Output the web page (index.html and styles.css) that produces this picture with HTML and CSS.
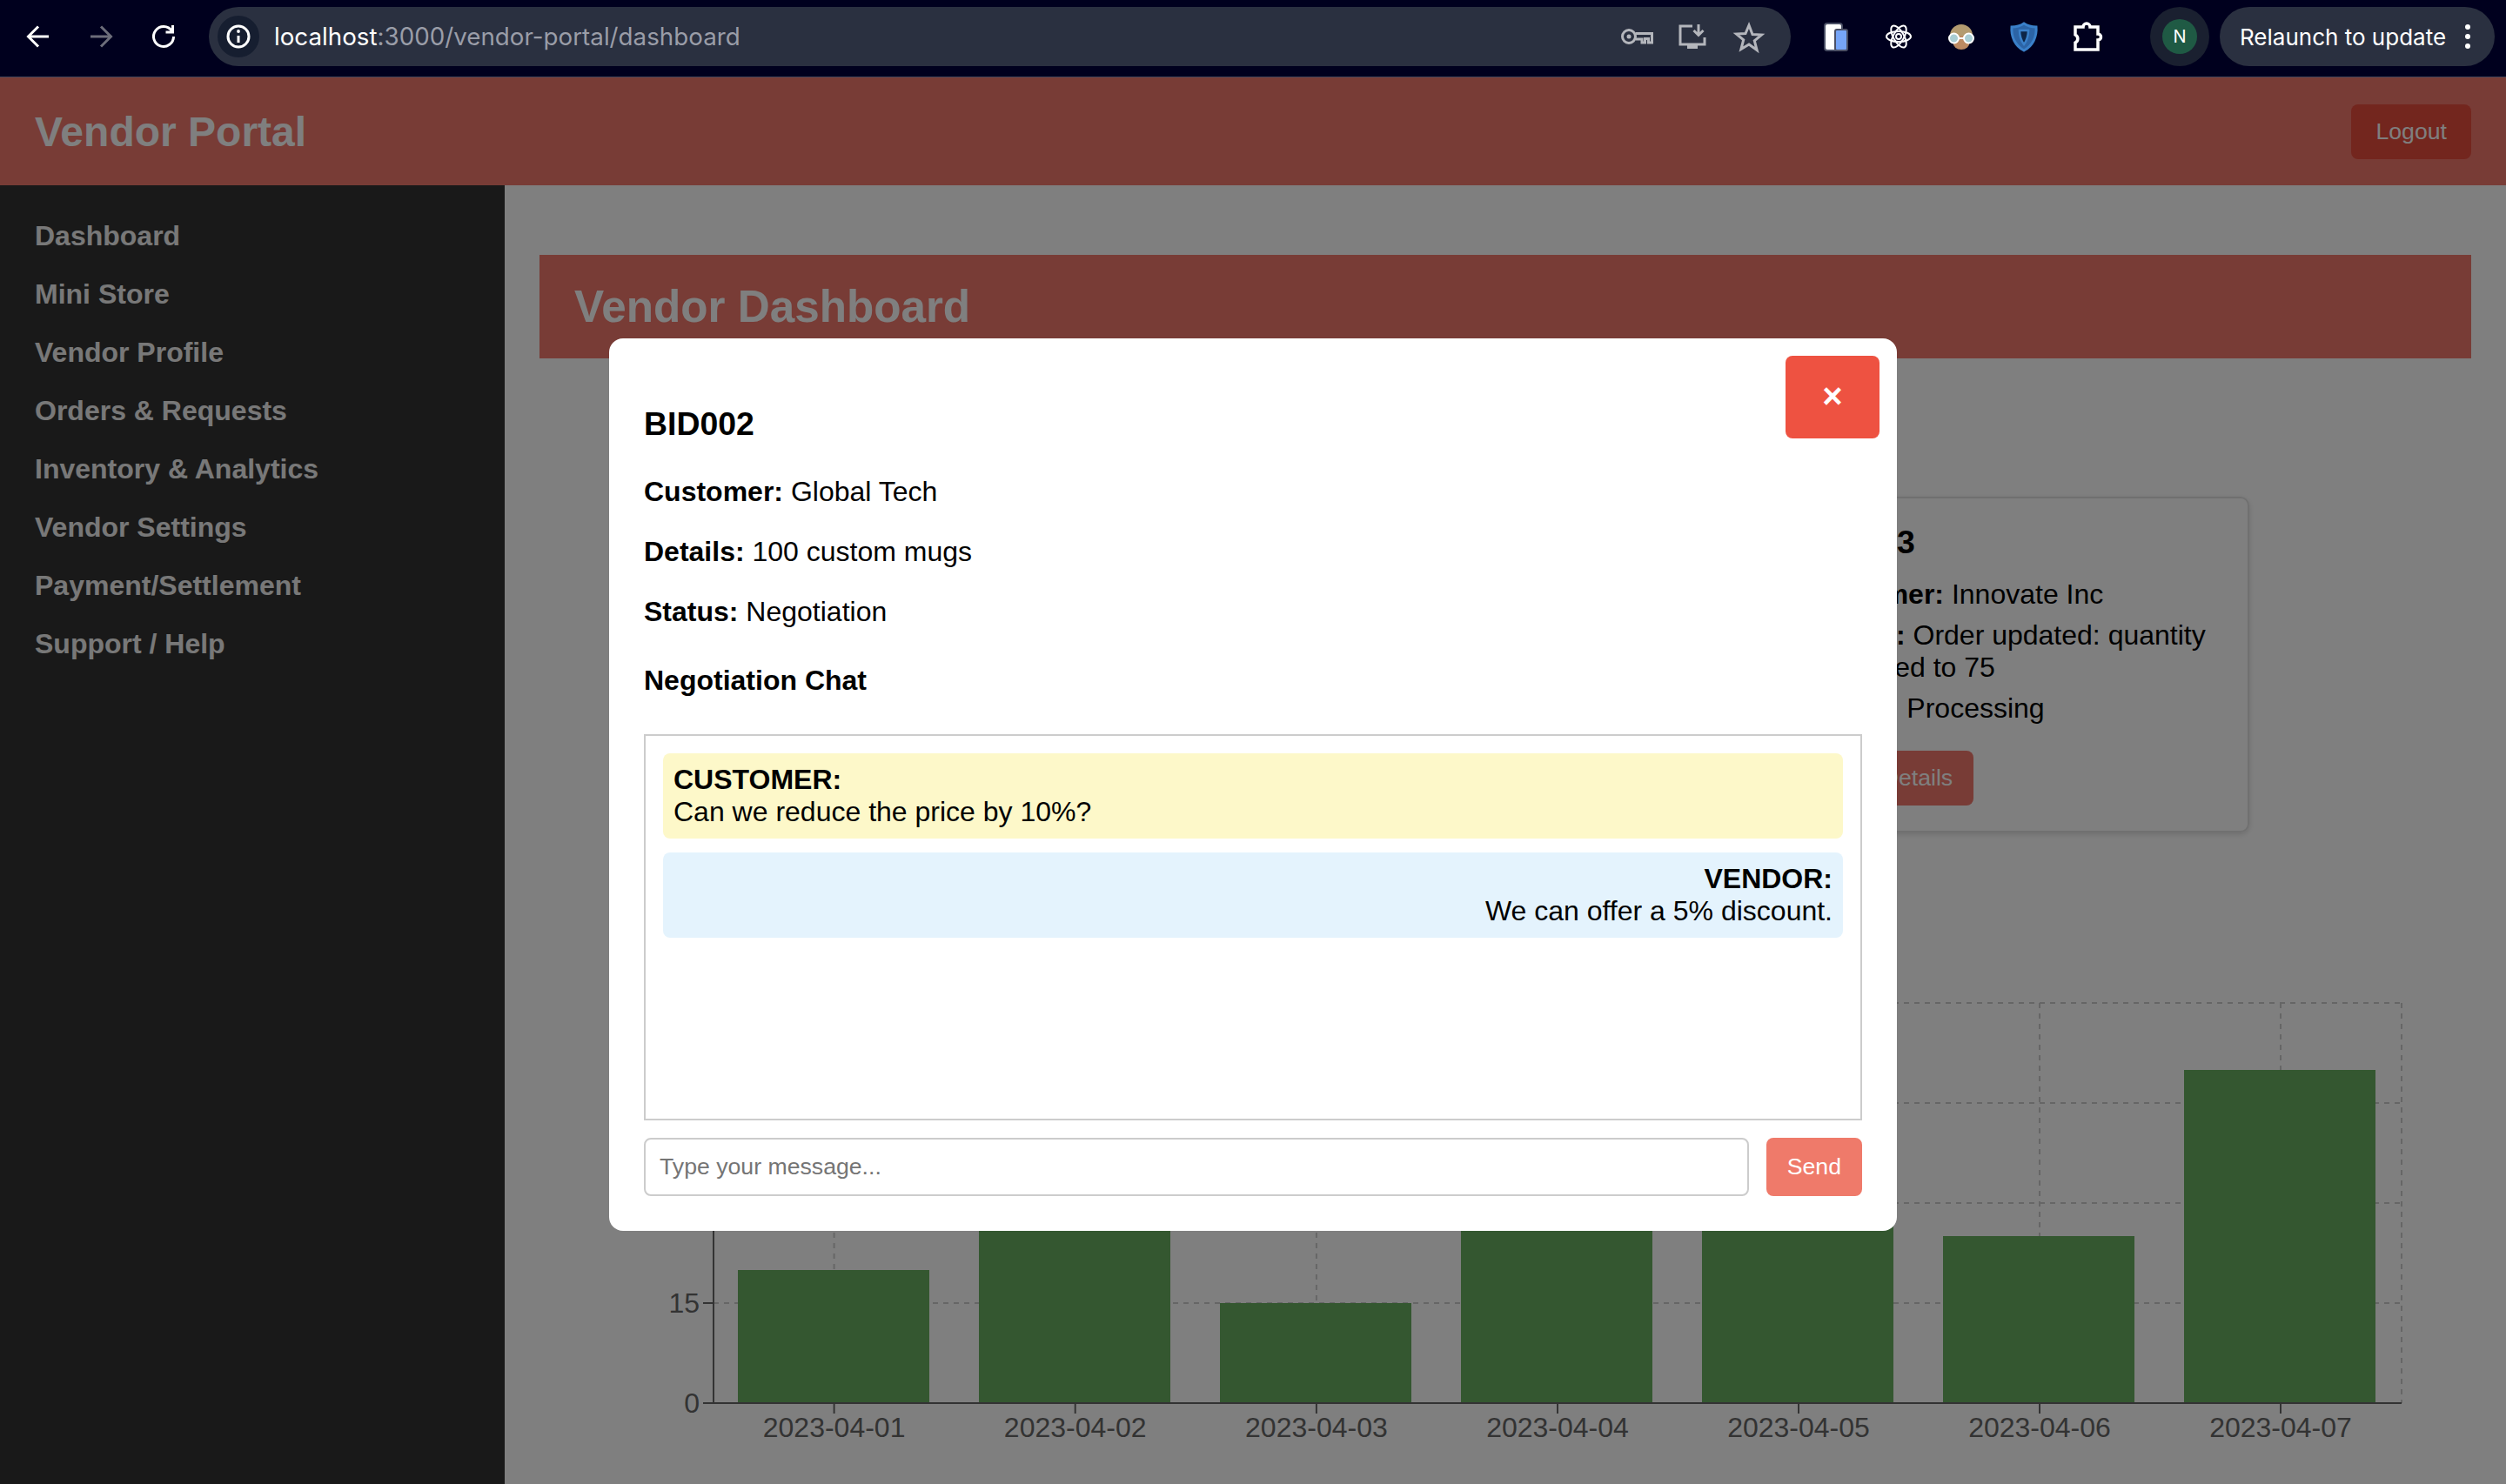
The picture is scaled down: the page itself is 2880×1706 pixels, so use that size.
FILE: index.html
```html
<!DOCTYPE html>
<html lang="en">
<head>
  <meta charset="UTF-8">
  <meta name="viewport" content="width=device-width, initial-scale=1.0">
  <title>Vendor Portal</title>
  <link rel="stylesheet" href="styles.css">
</head>
<body>
  <!-- browser toolbar -->
  <div class="toolbar">
    <div class="nav-buttons">
      <svg class="icon" viewBox="0 0 40 40"><path class="line-white" d="M32 20H9M20 8.500L8.500 20L20 31.500"/></svg>
      <svg class="icon" viewBox="0 0 40 40"><path class="line-dim" d="M8 20H31M20 8.500L31.500 20L20 31.500"/></svg>
      <svg class="icon" viewBox="0 0 40 40"><path class="line-white" d="M29.500 13.500A11.500 11.500 0 1 0 31.500 20M30.500 7v8h-8"/></svg>
    </div>
    <div class="address-bar">
      <span class="site-info">
        <svg class="info-icon" viewBox="0 0 48 48"><circle class="line-white" cx="24" cy="24" r="12"/><path class="line-white" d="M24 23v8"/><circle class="fill-white" cx="24" cy="18" r="1.900"/></svg>
      </span>
      <span class="url"><span class="url-host">localhost</span>:3000/vendor-portal/dashboard</span>
      <div class="address-actions">
        <svg class="icon" viewBox="0 0 40 40"><circle class="line-grey" cx="12" cy="20" r="7.500"/><circle class="fill-grey" cx="12" cy="20" r="2.500"/><path class="line-grey" d="M19.500 16.500H38.500V27h-4v-4.500h-4V27h-3.500v-4H19.500"/></svg>
        <svg class="icon" viewBox="0 0 40 40"><path class="line-grey" d="M20 8H6V29H34V21M27 6V18M21.500 13l5.500 5.500L32.500 13"/><rect class="fill-grey" x="14" y="30" width="12" height="4"/></svg>
        <svg class="icon" viewBox="0 0 40 40"><path class="line-grey" d="M20 7l4 10.500 10.500.6-8.200 6.800 2.800 10.600L20 29l-9.100 5.500 2.800-10.600-8.200-6.800 10.500-.6z"/></svg>
      </div>
    </div>
    <div class="extensions">
      <svg class="icon" viewBox="0 0 40 40"><rect x="7" y="5" width="20" height="31" rx="3" fill="#fff" stroke="#4b5066" stroke-width="2"/><rect x="19" y="12" width="14" height="24" rx="2" fill="#76a5f8" stroke="#4b5066" stroke-width="2"/></svg>
      <svg class="icon" viewBox="0 0 40 40"><g class="line-thin"><ellipse cx="20" cy="20" rx="14" ry="6"/><ellipse cx="20" cy="20" rx="14" ry="6" transform="rotate(60 20 20)"/><ellipse cx="20" cy="20" rx="14" ry="6" transform="rotate(120 20 20)"/><circle cx="20" cy="20" r="3"/></g></svg>
      <svg class="icon" viewBox="0 0 40 40"><circle cx="20" cy="19" r="13" fill="#b39b70"/><ellipse cx="20" cy="27" rx="9.500" ry="8" fill="#bd8a62"/><path d="M12 22h16" stroke="#fff" stroke-width="2"/><circle cx="11.500" cy="22" r="5.500" fill="#a9cdd4" stroke="#fff" stroke-width="2"/><circle cx="28.500" cy="22" r="5.500" fill="#a9cdd4" stroke="#fff" stroke-width="2"/></svg>
      <svg class="icon" viewBox="0 0 40 40"><path d="M20 5C26 9 31 9 34 9C35 20 30 31 20 36C10 31 5 20 6 9C9 9 14 9 20 5Z" fill="#2c64a6" stroke="#3a80c9" stroke-width="3"/><path d="M15 13H25C25 20 23 25 20 29C17 25 15 20 15 13Z" fill="#0d2547" stroke="#3a80c9" stroke-width="2.500"/></svg>
      <svg class="icon" viewBox="0 0 40 40"><path class="line-white puzzle" d="M7 9h9a4 4 0 0 1 8 0h9v8a3.500 3.500 0 0 1 0 7v11H7v-8a5 5 0 0 0 0-9z"/></svg>
    </div>
    <div class="profile"><span class="profile-badge">N</span></div>
    <div class="relaunch">
      <span>Relaunch to update</span>
      <svg class="menu-dots" viewBox="0 0 8 32"><circle class="fill-white" cx="4" cy="5" r="3"/><circle class="fill-white" cx="4" cy="16" r="3"/><circle class="fill-white" cx="4" cy="27" r="3"/></svg>
    </div>
  </div>

  <div class="app">
    <header class="topbar">
      <h1>Vendor Portal</h1>
      <button class="logout">Logout</button>
    </header>

    <div class="layout">
      <nav class="sidebar">
        <a>Dashboard</a>
        <a>Mini Store</a>
        <a>Vendor Profile</a>
        <a>Orders &amp; Requests</a>
        <a>Inventory &amp; Analytics</a>
        <a>Vendor Settings</a>
        <a>Payment/Settlement</a>
        <a>Support / Help</a>
      </nav>

      <main class="content">
        <div class="page-title">Vendor Dashboard</div>

        <div class="bids">
          <div class="bid-card">
            <h3>BID003</h3>
            <p><strong>Customer:</strong> Innovate Inc</p>
            <p><strong>Details:</strong> Order updated: quantity increased to 75</p>
            <p><strong>Status:</strong> Processing</p>
            <button class="details-btn">View Details</button>
          </div>
        </div>

        <svg class="chart" viewBox="0 0 2040 576">
          <g class="grid">
            <path d="M60 23H2000M60 138H2000M60 253H2000M60 368H2000"/>
            <path d="M198.600 23V483M475.700 23V483M752.900 23V483M1030 23V483M1307 23V483M1584 23V483M1861 23V483M2000 23V483"/>
          </g>
          <g class="bars">
            <rect x="88" y="330" width="220" height="153"/>
            <rect x="365" y="253" width="220" height="230"/>
            <rect x="642" y="368" width="220" height="115"/>
            <rect x="919" y="215" width="220" height="268"/>
            <rect x="1196" y="176" width="220" height="307"/>
            <rect x="1473" y="291" width="220" height="192"/>
            <rect x="1750" y="100" width="220" height="383"/>
          </g>
          <g class="axis">
            <path d="M60 23V483M48 483H2000"/>
            <path d="M48 23H60M48 138H60M48 253H60M48 368H60"/>
            <path d="M198.600 483v12M475.700 483v12M752.900 483v12M1030 483v12M1307 483v12M1584 483v12M1861 483v12"/>
          </g>
          <g class="tick-y">
            <text x="44" y="34">60</text>
            <text x="44" y="149">45</text>
            <text x="44" y="264">30</text>
            <text x="44" y="379">15</text>
            <text x="44" y="494">0</text>
          </g>
          <g class="tick-x">
            <text x="198.600" y="522">2023-04-01</text>
            <text x="475.700" y="522">2023-04-02</text>
            <text x="752.900" y="522">2023-04-03</text>
            <text x="1030" y="522">2023-04-04</text>
            <text x="1307" y="522">2023-04-05</text>
            <text x="1584" y="522">2023-04-06</text>
            <text x="1861" y="522">2023-04-07</text>
          </g>
        </svg>
      </main>
    </div>

    <!-- negotiation modal -->
    <div class="overlay">
      <div class="modal">
        <button class="close-btn">×</button>
        <h3>BID002</h3>
        <p><strong>Customer:</strong> Global Tech</p>
        <p><strong>Details:</strong> 100 custom mugs</p>
        <p><strong>Status:</strong> Negotiation</p>
        <h4>Negotiation Chat</h4>
        <div class="chat-box">
          <div class="msg msg-customer"><strong>CUSTOMER:</strong><br>Can we reduce the price by 10%?</div>
          <div class="msg msg-vendor"><strong>VENDOR:</strong><br>We can offer a 5% discount.</div>
        </div>
        <div class="chat-form">
          <input type="text" placeholder="Type your message...">
          <button class="send-btn">Send</button>
        </div>
      </div>
    </div>
  </div>
</body>
</html>
```

FILE: styles.css
```css
* {
  box-sizing: border-box;
}
body {
  margin: 0;
  height: 100vh;
  overflow: hidden;
  display: flex;
  flex-direction: column;
  font-family: "Liberation Sans", Arial, sans-serif;
  font-size: 32px;
  background-color: #fff;
}

/* browser toolbar */
.toolbar {
  flex: none;
  height: 89px;
  padding: 8px 13px 8px 24px;
  display: flex;
  align-items: flex-start;
  background-color: #00001e;
  border-bottom: 1px solid #45465a;
  font-family: Inter, "Liberation Sans", sans-serif;
  color: #fff;
}
.icon {
  width: 40px;
  height: 40px;
  flex: none;
}
.line-white, .line-dim, .line-grey, .line-thin {
  fill: none;
  stroke-width: 3;
}
.line-white {
  stroke: #fff;
}
.line-dim {
  stroke: #6c6d7a;
}
.line-grey {
  stroke: #b4b6bc;
}
.line-thin {
  fill: none;
  stroke: #fff;
  stroke-width: 2;
}
.puzzle {
  stroke-width: 3.5;
}
.fill-white {
  fill: #fff;
}
.fill-grey {
  fill: #b4b6bc;
}
.nav-buttons {
  display: flex;
  gap: 32px;
  height: 68px;
  align-items: center;
}
.address-bar {
  flex: 1;
  height: 68px;
  margin-left: 32px;
  padding: 0 28px 0 10px;
  display: flex;
  align-items: center;
  background-color: #2a3040;
  border-radius: 34px;
}
.site-info {
  width: 48px;
  height: 48px;
  border-radius: 50%;
  background-color: #161e30;
}
.info-icon {
  display: block;
  width: 48px;
  height: 48px;
}
.url {
  margin-left: 17px;
  font-size: 27.750px;
  color: #9a9da8;
}
.url-host {
  color: #fff;
}
.address-actions {
  margin-left: auto;
  display: flex;
  gap: 25px;
}
.extensions {
  display: flex;
  gap: 32px;
  height: 68px;
  align-items: center;
  margin-left: 32px;
}
.profile {
  width: 68px;
  height: 68px;
  margin-left: 53px;
  display: flex;
  align-items: center;
  justify-content: center;
  border-radius: 50%;
  background-color: #1a2030;
}
.profile-badge {
  width: 40px;
  height: 40px;
  display: flex;
  align-items: center;
  justify-content: center;
  border-radius: 50%;
  background-color: #1f5a44;
  font-size: 20px;
}
.relaunch {
  width: 316px;
  height: 68px;
  margin-left: 12px;
  padding-left: 23px;
  display: flex;
  align-items: center;
  background-color: #2a3040;
  border-radius: 34px;
  font-size: 26px;
}
.menu-dots {
  width: 8px;
  height: 32px;
  margin-left: 21px;
}

/* page */
.app {
  flex: 1;
  position: relative;
  display: flex;
  flex-direction: column;
  min-height: 0;
}
.topbar {
  flex: none;
  height: 124px;
  padding: 0 40px;
  display: flex;
  align-items: center;
  justify-content: space-between;
  background-color: #f0786c;
  color: #fff;
}
.topbar h1 {
  margin: 0;
  font-size: 48px;
}
button {
  font-family: inherit;
  font-size: 26.670px;
  color: #fff;
  border: none;
  border-radius: 8px;
}
.logout {
  padding: 16px 28px;
  background-color: #e74c3c;
}
.layout {
  flex: 1;
  display: flex;
  min-height: 0;
}
.sidebar {
  flex: none;
  width: 580px;
  padding: 25px 0 0 40px;
  display: flex;
  flex-direction: column;
  background-color: #333;
  color: #f0f0f0;
  font-weight: bold;
}
.sidebar a {
  padding: 15px 0;
}
.content {
  flex: 1;
  min-width: 0;
  padding: 80px 40px 0;
  overflow: hidden;
}
.page-title {
  height: 119px;
  padding: 30px 40px 0;
  background-color: #f0786c;
  color: #fff;
  font-size: 51.200px;
  font-weight: bold;
}
.bids {
  margin-top: 159px;
  padding-right: 255px;
  display: flex;
  justify-content: flex-end;
}
.bid-card {
  width: 553px;
  padding: 29px 40px 29px;
  border: 2px solid #e0e0e0;
  border-radius: 10px;
  box-shadow: 0 2px 6px rgba(0, 0, 0, 0.15);
}
.bid-card h3 {
  margin: 0 0 20px;
  font-size: 37.440px;
}
.bid-card p {
  margin: 0 0 10px;
}
.details-btn {
  margin-top: 20px;
  padding: 16px 24px;
  background-color: #f0786c;
}

/* chart */
.chart {
  display: block;
  width: 2040px;
  height: 576px;
  margin: 173px 0 0 140px;
}
.grid {
  fill: none;
  stroke: #ccc;
  stroke-width: 2;
  stroke-dasharray: 6 6;
}
.bars {
  fill: #69ae60;
}
.axis {
  fill: none;
  stroke: #666;
  stroke-width: 2;
}
.tick-y, .tick-x {
  fill: #666;
  font-size: 32px;
}
.tick-y {
  text-anchor: end;
}
.tick-x {
  text-anchor: middle;
}

/* modal */
.overlay {
  position: absolute;
  inset: 0;
  padding-top: 300px;
  display: flex;
  justify-content: center;
  align-items: flex-start;
  background-color: rgba(0, 0, 0, 0.5);
}
.modal {
  position: relative;
  width: 1480px;
  padding: 40px;
  background-color: #fff;
  border-radius: 16px;
}
.modal h3 {
  margin: 37.440px 0;
  font-size: 37.440px;
}
.modal p {
  margin: 32px 0;
}
.modal h4 {
  margin: 42.560px 0;
  font-size: 32px;
}
.close-btn {
  position: absolute;
  top: 20px;
  right: 20px;
  width: 108px;
  height: 95px;
  padding: 0 0 3px;
  background-color: #ee5241;
  font-size: 40px;
  font-weight: bold;
}
.chat-box {
  height: 444px;
  padding: 20px;
  border: 2px solid #ccc;
}
.msg {
  margin-bottom: 16px;
  padding: 12px;
  border-radius: 8px;
}
.msg-customer {
  background-color: #fdf8c9;
}
.msg-vendor {
  background-color: #e4f3fd;
  text-align: right;
}
.chat-form {
  margin-top: 20px;
  display: flex;
  gap: 20px;
}
.chat-form input {
  flex: 1;
  padding: 16px;
  border: 2px solid #ccc;
  border-radius: 8px;
  font-family: inherit;
  font-size: 26.670px;
}
.send-btn {
  padding: 0 24px;
  background-color: #ef7a6a;
}
```
